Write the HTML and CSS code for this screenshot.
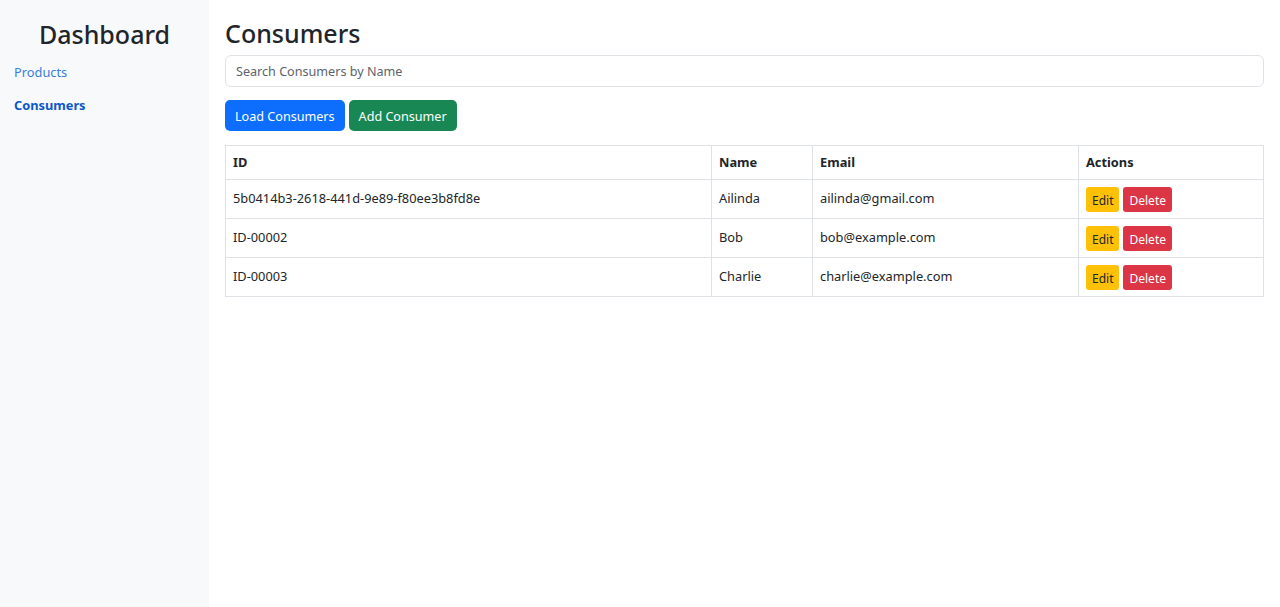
FILE: index.html
```html
<!DOCTYPE html>
<html lang="en">
<head>
<meta charset="utf-8">
<title>Dashboard</title>
<link rel="stylesheet" href="styles.css">
</head>
<body>
<div class="layout">
  <aside class="sidebar">
    <h1 class="brand">Dashboard</h1>
    <nav class="nav">
      <a class="nav-link" href="#">Products</a>
      <a class="nav-link active" href="#">Consumers</a>
    </nav>
  </aside>
  <main class="main">
    <h2 class="title">Consumers</h2>
    <input class="search" type="text" placeholder="Search Consumers by Name">
    <div class="toolbar">
      <button class="btn btn-primary">Load Consumers</button>
      <button class="btn btn-success">Add Consumer</button>
    </div>
    <table class="table">
      <thead>
        <tr>
          <th class="col-id">ID</th>
          <th class="col-name">Name</th>
          <th class="col-email">Email</th>
          <th class="col-actions">Actions</th>
        </tr>
      </thead>
      <tbody>
        <tr>
          <td>5b0414b3-2618-441d-9e89-f80ee3b8fd8e</td>
          <td>Ailinda</td>
          <td>ailinda@gmail.com</td>
          <td><button class="btn-sm btn-warning">Edit</button><button class="btn-sm btn-danger">Delete</button></td>
        </tr>
        <tr>
          <td>ID-00002</td>
          <td>Bob</td>
          <td>bob@example.com</td>
          <td><button class="btn-sm btn-warning">Edit</button><button class="btn-sm btn-danger">Delete</button></td>
        </tr>
        <tr>
          <td>ID-00003</td>
          <td>Charlie</td>
          <td>charlie@example.com</td>
          <td><button class="btn-sm btn-warning">Edit</button><button class="btn-sm btn-danger">Delete</button></td>
        </tr>
      </tbody>
    </table>
  </main>
</div>
</body>
</html>
```
FILE: styles.css
```css
* { box-sizing: border-box; }
html, body { margin: 0; padding: 0; }
body {
  font-family: "Noto Sans", "Open Sans", sans-serif;
  font-size: 13px;
  color: #212529;
  background: #fff;
}
.layout {
  display: flex;
  min-height: 607px;
}
.sidebar {
  width: 209px;
  flex: 0 0 209px;
  background: #f8f9fa;
  padding: 16px 0 0 0;
}
.brand {
  margin: 0;
  text-align: center;
  font-size: 25px;
  font-weight: 500;
  line-height: 36px;
}
.nav {
  display: flex;
  flex-direction: column;
  padding: 0 14px;
  margin-top: 10px;
}
.nav-link {
  color: #3b7ddd;
  text-decoration: none;
  font-size: 12.8px;
  line-height: 20px;
  margin-bottom: 13px;
}
.nav-link.active {
  color: #0a58ca;
  font-weight: 700;
}
.main {
  flex: 1;
  padding: 15px 16px 0 16px;
}
.title {
  margin: 0 0 4px 0;
  font-size: 25px;
  font-weight: 500;
  line-height: 36px;
}
.search {
  display: block;
  width: 100%;
  height: 32px;
  border: 1px solid #dee2e6;
  border-radius: 6px;
  padding: 0 10px;
  font-family: inherit;
  font-size: 12.6px;
  color: #212529;
  outline: none;
}
.search::placeholder { color: #5c636a; }
.toolbar {
  display: flex;
  gap: 4px;
  margin: 13px 0 14px 0;
}
.btn {
  height: 31px;
  border: none;
  border-radius: 5px;
  padding: 1px 10px 0 10px;
  font-family: inherit;
  font-size: 12.6px;
  color: #fff;
  cursor: pointer;
}
.btn-primary { background: #0d6efd; }
.btn-success { background: #198754; }
.table {
  width: 100%;
  border-collapse: collapse;
  table-layout: fixed;
  font-size: 12.8px;
}
.table th, .table td {
  border: 1px solid #dee2e6;
  text-align: left;
  padding: 7px 7px 6px 7px;
  vertical-align: top;
}
.table th {
  font-weight: 700;
  line-height: 20px;
  padding-top: 6px;
  padding-bottom: 7px;
}
.table td { line-height: 22px; }
.col-id { width: 486px; }
.col-name { width: 101px; }
.col-email { width: 266px; }
.col-actions { width: auto; }
.btn-sm {
  height: 25px;
  border: none;
  border-radius: 3px;
  padding: 1px 6px 0 6px;
  font-family: inherit;
  font-size: 12px;
  margin-right: 4px;
  vertical-align: top;
  cursor: pointer;
}
.btn-warning { background: #ffc107; color: #212529; }
.btn-danger { background: #dc3545; color: #fff; }
```
